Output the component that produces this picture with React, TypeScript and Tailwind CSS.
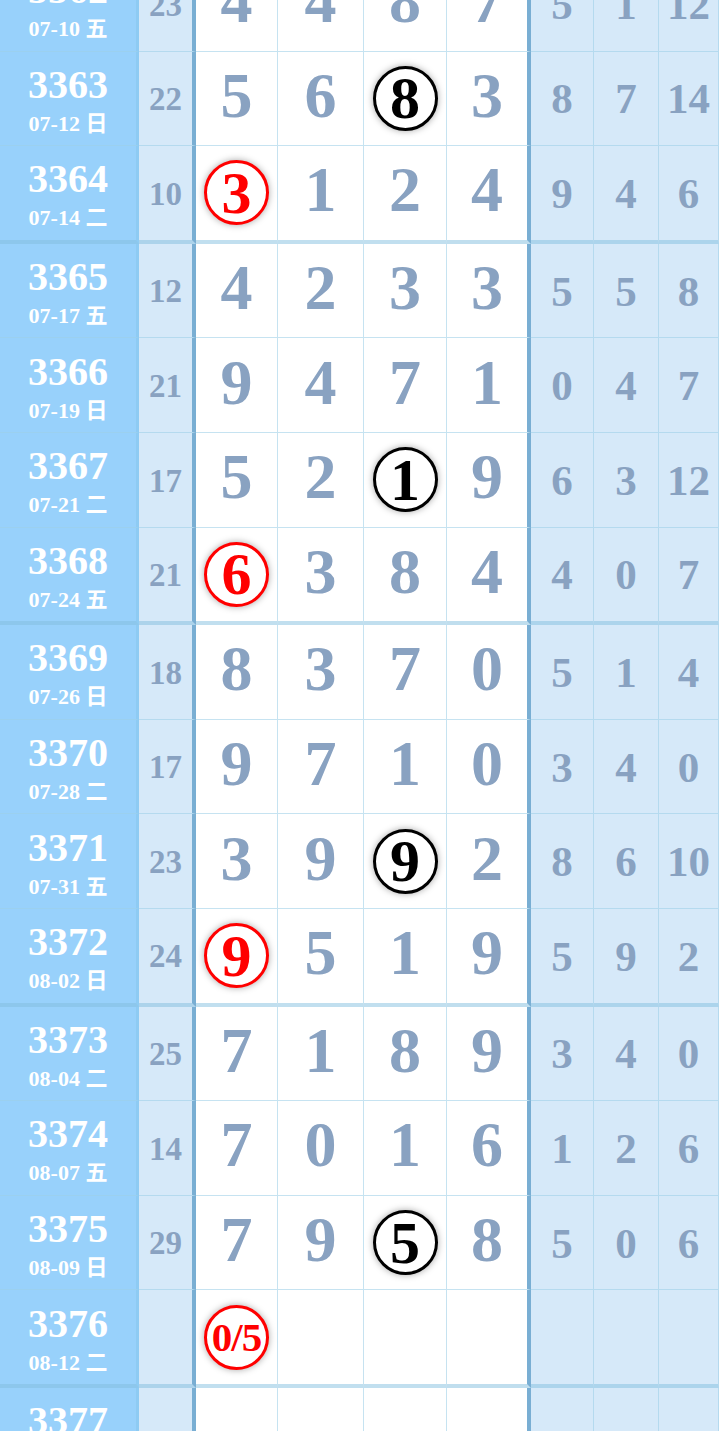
import React from 'react';

type Row = {
    issue: string;
    date: string;
    sum: string;
    digits: string[];
    circle?: { col: number; text: string; red: boolean };
    extra: string[];
};

// 开奖走势表：期号 | 和值 | 四位号码 | 尾部统计
const rows: Row[] = [
    { issue: '3362', date: '07-10 五', sum: '23', digits: ['4', '4', '8', '7'], extra: ['5', '1', '12'] },
    { issue: '3363', date: '07-12 日', sum: '22', digits: ['5', '6', '8', '3'], circle: { col: 2, text: '8', red: false }, extra: ['8', '7', '14'] },
    { issue: '3364', date: '07-14 二', sum: '10', digits: ['3', '1', '2', '4'], circle: { col: 0, text: '3', red: true }, extra: ['9', '4', '6'] },
    { issue: '3365', date: '07-17 五', sum: '12', digits: ['4', '2', '3', '3'], extra: ['5', '5', '8'] },
    { issue: '3366', date: '07-19 日', sum: '21', digits: ['9', '4', '7', '1'], extra: ['0', '4', '7'] },
    { issue: '3367', date: '07-21 二', sum: '17', digits: ['5', '2', '1', '9'], circle: { col: 2, text: '1', red: false }, extra: ['6', '3', '12'] },
    { issue: '3368', date: '07-24 五', sum: '21', digits: ['6', '3', '8', '4'], circle: { col: 0, text: '6', red: true }, extra: ['4', '0', '7'] },
    { issue: '3369', date: '07-26 日', sum: '18', digits: ['8', '3', '7', '0'], extra: ['5', '1', '4'] },
    { issue: '3370', date: '07-28 二', sum: '17', digits: ['9', '7', '1', '0'], extra: ['3', '4', '0'] },
    { issue: '3371', date: '07-31 五', sum: '23', digits: ['3', '9', '9', '2'], circle: { col: 2, text: '9', red: false }, extra: ['8', '6', '10'] },
    { issue: '3372', date: '08-02 日', sum: '24', digits: ['9', '5', '1', '9'], circle: { col: 0, text: '9', red: true }, extra: ['5', '9', '2'] },
    { issue: '3373', date: '08-04 二', sum: '25', digits: ['7', '1', '8', '9'], extra: ['3', '4', '0'] },
    { issue: '3374', date: '08-07 五', sum: '14', digits: ['7', '0', '1', '6'], extra: ['1', '2', '6'] },
    { issue: '3375', date: '08-09 日', sum: '29', digits: ['7', '9', '5', '8'], circle: { col: 2, text: '5', red: false }, extra: ['5', '0', '6'] },
    { issue: '3376', date: '08-12 二', sum: '', digits: ['', '', '', ''], circle: { col: 0, text: '0/5', red: true }, extra: ['', '', ''] },
    { issue: '3377', date: '08-14 五', sum: '', digits: ['', '', '', ''], extra: ['', '', ''] },
];

const digitWidths = ['w-[82px]', 'w-[86px]', 'w-[83px]', 'w-[84px]'];
const extraWidths = ['w-[63px]', 'w-[65px]', 'w-[60px]'];

function Circle({ text, red }: { text: string; red: boolean }) {
    return (
        <div
            className={
                'flex h-[65px] w-[65px] items-center justify-center rounded-full border-[3px] bg-white shadow-[0_0_7px_rgba(0,0,0,0.35)] ' +
                (red ? 'border-[#ff0000] text-[#ff0000]' : 'border-black text-black')
            }
        >
            <span className={(text.length > 1 ? 'text-[41px] tracking-[-1px]' : 'text-[60px]') + ' leading-none font-bold'}>{text}</span>
        </div>
    );
}

export default function App() {
    return (
        <div className="min-h-screen w-[719px] overflow-hidden bg-white" style={{ fontFamily: '"Liberation Serif", "Noto Sans CJK SC", serif' }}>
            <div className="-mt-[43px] flex flex-col">
                {rows.map((row) => {
                    const thick = Number(row.issue) % 4 === 0;
                    const bottom = thick ? 'border-b-4 border-b-[rgba(130,190,222,0.5)]' : 'border-b border-b-[rgba(158,207,231,0.585)]';
                    return (
                        <div key={row.issue} className={'flex ' + (thick ? 'h-[97.6px]' : 'h-[94.6px]')}>
                            {/* 期号 + 日期 */}
                            <div className={'flex w-[139px] flex-col items-center justify-center border-r-[3px] border-r-[#8ecbf3] bg-[#98d1fb] pt-[7px] text-white ' + bottom}>
                                <div className="-mt-[2px] text-[40px] leading-[40px] font-bold">{row.issue}</div>
                                <div className="mt-[6px] text-[22px] leading-[26px] font-bold">{row.date}</div>
                            </div>
                            {/* 和值 */}
                            <div className={'flex w-[57px] items-center justify-center border-r-4 border-r-[#79aed3] bg-[#d6e9f9] text-[33px] font-bold text-[#89a2c1] ' + bottom}>
                                <span className="mt-[3px]">{row.sum}</span>
                            </div>
                            {/* 号码 */}
                            {row.digits.map((d, i) => (
                                <div
                                    key={i}
                                    className={
                                        'flex items-center justify-center bg-white text-[64px] leading-none font-bold text-[#89a2c1] ' +
                                        digitWidths[i] +
                                        (i === 3 ? ' border-r-4 border-r-[#79aed3] ' : ' border-r border-r-[rgba(158,207,231,0.585)] ') +
                                        bottom
                                    }
                                >
                                    {row.circle && row.circle.col === i ? <Circle text={row.circle.text} red={row.circle.red} /> : <span className="-mt-[5px]">{d}</span>}
                                </div>
                            ))}
                            {/* 统计 */}
                            {row.extra.map((e, i) => (
                                <div
                                    key={i}
                                    className={
                                        'flex items-center justify-center border-r border-r-[rgba(158,207,231,0.585)] bg-[#d6e9f9] text-[43px] leading-none font-bold text-[#89a2c1] ' +
                                        extraWidths[i] +
                                        ' ' +
                                        bottom
                                    }
                                >
                                    <span className="mt-[1px]">{e}</span>
                                </div>
                            ))}
                        </div>
                    );
                })}
            </div>
        </div>
    );
}
